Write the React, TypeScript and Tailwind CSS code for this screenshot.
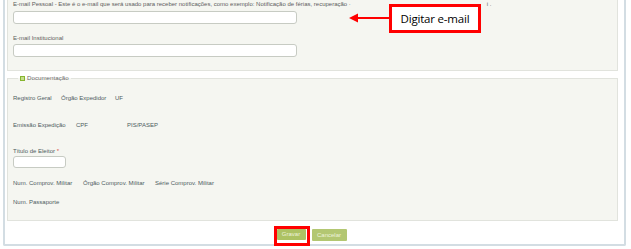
import React from "react";

const lbl = "text-[6px] leading-[8px] text-[#4e5c5f] whitespace-nowrap";

export default function App() {
  return (
    <div className="w-[631px] h-[249px] bg-white relative overflow-hidden font-['Liberation_Sans',Arial,sans-serif]">
      <div className="ml-[3px] w-[623px] h-[246px] border-l-2 border-r-2 border-b-2 border-[#d3dde3] rounded-b-[2px] pl-[2px] pr-[6px]">
        {/* top panel */}
        <div className="h-[71px] bg-[#f5f6f1] border border-t-0 border-[#e1e3dd] pl-[5px] pt-0">
          <div className="flex text-[6px] leading-[8px] text-[#606060] whitespace-nowrap">
            <span>
              E-mail Pessoal - Este é o e-mail que será usado para receber notificações, como exemplo: Notificação de férias, recuperação ·
            </span>
            <span className="ml-[136px]">i .</span>
          </div>
          <div className="mt-[3px] w-[284px] h-[13px] bg-white border border-[#c7cbc3] rounded-[3px]" />
          <div className="mt-[10px] text-[6px] leading-[8px] text-[#606060]">E-mail Institucional</div>
          <div className="mt-[2px] w-[284px] h-[13px] bg-white border border-[#c7cbc3] rounded-[3px]" />
        </div>

        {/* documentation fieldset */}
        <fieldset className="mt-[3px] h-[147px] bg-[#f5f6f1] border border-[#e1e3dd] pl-[5px]">
          <legend className="ml-[5px] px-[2px] flex items-center gap-[2px] text-[6.2px] leading-[8px] text-[#6a6a6a]">
            <span className="w-[5px] h-[5px] border border-[#86b52f] bg-[#c5df8c]" />
            <span>Documentação</span>
          </legend>
          <div className="mt-[12px] flex">
            <span className={`${lbl} w-[48px]`}>Registro Geral</span>
            <span className={`${lbl} w-[54px]`}>Órgão Expedidor</span>
            <span className={lbl}>UF</span>
          </div>
          <div className="mt-[19px] flex">
            <span className={`${lbl} w-[63px]`}>Emissão Expedição</span>
            <span className={`${lbl} w-[51px]`}>CPF</span>
            <span className={lbl}>PIS/PASEP</span>
          </div>
          <div className={`mt-[18px] ${lbl}`}>
            Título de Eleitor <span className="text-[#d9534f]">*</span>
          </div>
          <div className="mt-[1px] w-[53px] h-[12px] bg-white border border-[#c7cbc3] rounded-[3px]" />
          <div className="mt-[11px] flex">
            <span className={`${lbl} w-[70px]`}>Num. Comprov. Militar</span>
            <span className={`${lbl} w-[72px]`}>Órgão Comprov. Militar</span>
            <span className={lbl}>Série Comprov. Militar</span>
          </div>
          <div className={`mt-[11px] ${lbl}`}>Num. Passaporte</div>
        </fieldset>

        {/* buttons */}
        <div className="flex justify-center gap-[6px] pt-[8px] pr-[2px]">
          <span className="relative">
            <span className="block h-[11px] w-[29px] bg-[#adc263] rounded-[1px] text-[6px] leading-[11px] text-center text-[#eef3dc]">
              Gravar
            </span>
            <span className="absolute -left-[3px] -top-[3px] -right-[4px] -bottom-[5px] border-[3px] border-[#ff0000]" />
          </span>
          <span className="block h-[12px] w-[35px] bg-[#b3c772] rounded-[1px] text-[6px] leading-[12px] text-center text-[#eef3dc]">
            Cancelar
          </span>
        </div>
      </div>

      {/* annotation */}
      <div className="absolute left-[389px] top-[4px] w-[92px] h-[29px] bg-white border-[3px] border-[#ff0000] flex items-center justify-center">
        <span className="text-[11.5px] text-black font-['Open_Sans',sans-serif] tracking-[-0.2px]">Digitar e-mail</span>
      </div>
      <svg className="absolute left-[348px] top-[12px]" width="42" height="12" viewBox="0 0 42 12">
        <line x1="8" y1="6" x2="42" y2="6" stroke="#ff0000" strokeWidth="2" />
        <polygon points="1,6 10,1.5 10,10.5" fill="#ff0000" />
      </svg>
    </div>
  );
}
